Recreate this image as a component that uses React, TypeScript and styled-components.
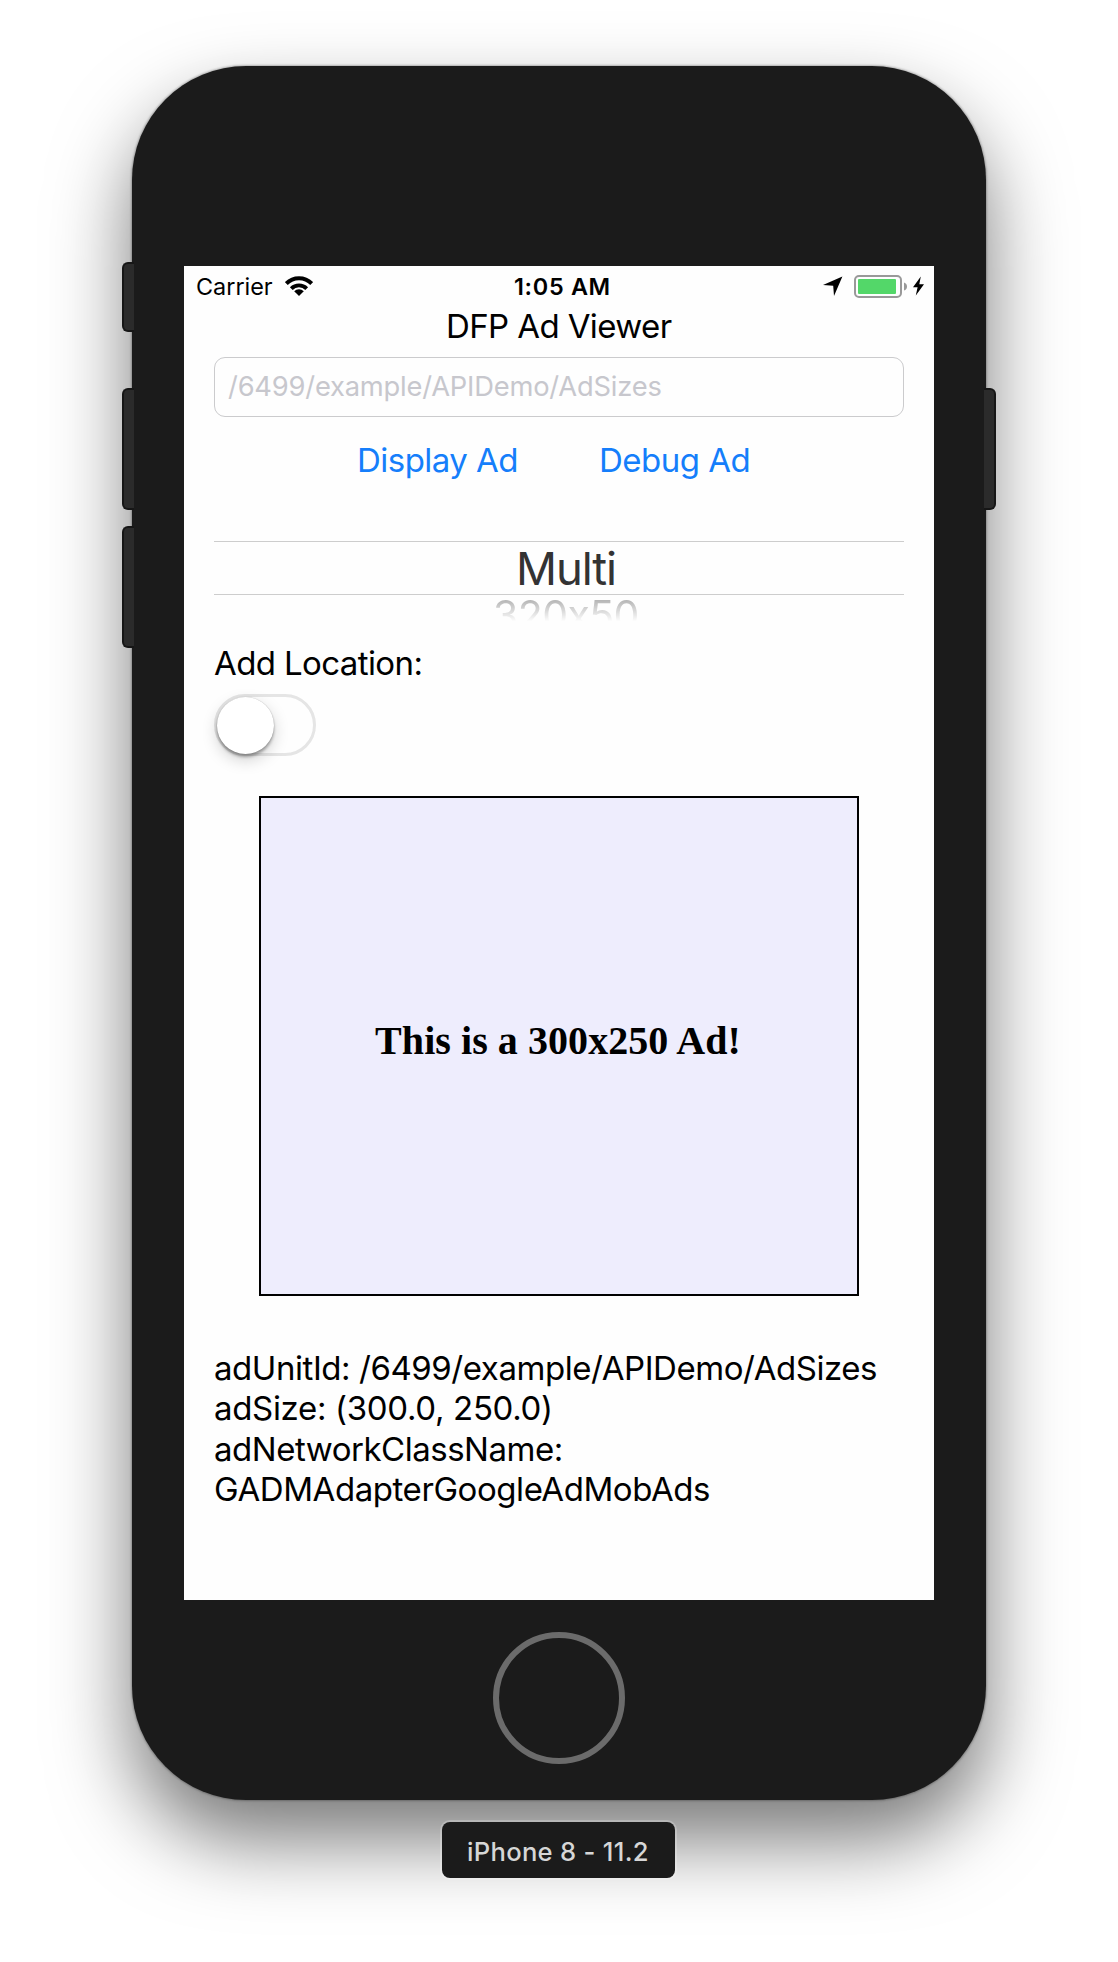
import React from 'react';
import styled, { createGlobalStyle } from 'styled-components';

const GlobalStyle = createGlobalStyle`
  * { box-sizing: border-box; }
  body {
    margin: 0;
    background: #fff;
    font-family: Inter, Roboto, "Liberation Sans", sans-serif;
    color: #000;
  }
`;

const Stage = styled.main`
  width: 1118px;
  height: 1962px;
  padding-top: 66px;
  display: flex;
  flex-direction: column;
  align-items: center;
  overflow: hidden;
`;

const Device = styled.div`
  display: flex;
  align-items: flex-start;
`;

const Rail = styled.div<{ $side: 'left' | 'right'; $top: number }>`
  position: relative;
  z-index: 1;
  display: flex;
  flex-direction: column;
  padding-top: ${(p) => p.$top}px;
  margin-${(p) => (p.$side === 'left' ? 'right' : 'left')}: -2px;
`;

const SideKey = styled.div<{ $side: 'left' | 'right'; $height: number; $gap?: number }>`
  width: 12px;
  height: ${(p) => p.$height}px;
  margin-top: ${(p) => p.$gap ?? 0}px;
  background: #2b2b2b;
  border: 2px solid #161616;
  border-${(p) => (p.$side === 'left' ? 'right' : 'left')}: 0;
  border-radius: ${(p) => (p.$side === 'left' ? '6px 0 0 6px' : '0 6px 6px 0')};
`;

const Body = styled.div`
  width: 854px;
  height: 1734px;
  border-radius: 114px;
  background: #1b1b1b;
  display: flex;
  flex-direction: column;
  align-items: center;
  padding-top: 200px;
  box-shadow: 0 0 2px 1px rgba(0, 0, 0, 0.25), 0 40px 80px rgba(0, 0, 0, 0.53);
`;

const Screen = styled.div`
  width: 750px;
  height: 1334px;
  background: #fefefe;
  display: flex;
  flex-direction: column;
`;

const HomeButton = styled.div`
  width: 132px;
  height: 132px;
  margin-top: 32px;
  border: 6px solid #6b6b6b;
  border-radius: 50%;
`;

const StatusBar = styled.header`
  display: grid;
  grid-template-columns: 318px 1fr auto;
  align-items: center;
  height: 40px;
  padding: 0 10px 0 12px;
  font-size: 23.4px;
  line-height: 38px;
`;

const StatusGroup = styled.div`
  display: flex;
  align-items: center;
`;

const Carrier = styled.span`
  width: 89px;
  padding-top: 2px;
`;

const Clock = styled.span`
  padding-top: 2px;
  font-weight: 600;
  letter-spacing: 0.7px;
`;

const BatteryIcon = styled.svg`
  margin: 0 6px 0 11px;
`;

const Content = styled.div`
  padding: 0 30px;
  display: flex;
  flex-direction: column;
`;

const Title = styled.h1`
  margin: 0;
  padding-left: 232px;
  font-size: 33px;
  font-weight: 400;
  line-height: 40px;
  letter-spacing: -0.605px;
`;

const Field = styled.div`
  height: 60px;
  margin-top: 11px;
  padding: 0 13px;
  border: 1px solid #cbcbcd;
  border-radius: 11px;
  font-size: 27.3px;
  line-height: 58px;
  letter-spacing: -0.195px;
  color: #c7c7cd;
`;

const Actions = styled.div`
  display: flex;
  height: 40px;
  margin-top: 23px;
  padding-left: 143px;
`;

const LinkButton = styled.button<{ $width?: number }>`
  width: ${(p) => (p.$width ? `${p.$width}px` : 'auto')};
  padding: 0;
  border: 0;
  background: none;
  text-align: left;
  font: inherit;
  font-size: 33px;
  line-height: 40px;
  letter-spacing: -0.526px;
  color: #157efb;
  white-space: nowrap;
`;

const Picker = styled.div`
  margin-top: 61px;
  height: 81px;
`;

const PickerSelected = styled.div`
  height: 54px;
  padding: 2px 0 0 302px;
  border: solid #cdcdcd;
  border-width: 1px 0;
  font-size: 45.4px;
  line-height: 50px;
  letter-spacing: -1.1px;
  color: #333;
`;

const PickerNext = styled.div`
  height: 27px;
  padding-left: 279px;
  overflow: hidden;
  font-size: 41px;
  font-weight: 400;
  line-height: 41px;
  letter-spacing: -0.6px;
  color: #b2b2b2;
  mask-image: linear-gradient(#000 15%, transparent 98%);
`;

const Label = styled.label`
  margin-top: 21px;
  font-size: 33px;
  line-height: 40px;
  letter-spacing: -0.607px;
`;

const Switch = styled.div`
  width: 102px;
  height: 62px;
  margin-top: 11px;
  border: 3px solid #e5e5e5;
  border-radius: 31px;
`;

const Knob = styled.div`
  width: 57px;
  height: 57px;
  border-radius: 50%;
  background: #fff;
  box-shadow: 0 0 1px rgba(0, 0, 0, 0.3), 0 3px 3px rgba(0, 0, 0, 0.3), 0 6px 16px rgba(0, 0, 0, 0.18);
`;

const AdBanner = styled.div`
  width: 600px;
  height: 500px;
  margin: 40px 0 0 45px;
  padding: 0 2px 11px 0;
  border: 2px solid #000;
  background: #eeedfd;
  display: flex;
  align-items: center;
  justify-content: center;
  font: 700 40px/46px "Liberation Serif", "Times New Roman", serif;
  letter-spacing: 0.06px;
`;

const Info = styled.div`
  margin-top: 51px;
  padding-top: 0.5px;
  font-size: 33px;
  line-height: 40.5px;
  white-space: nowrap;
`;

const InfoLine = styled.div<{ $tracking: number }>`
  letter-spacing: ${(p) => p.$tracking}px;
`;

const DeviceName = styled.div`
  width: 233px;
  height: 56px;
  margin: 22px 1px 0 0;
  padding: 2px 0 0 25px;
  border-radius: 8px;
  background: #1b1b1b;
  box-shadow: 0 0 0 2px rgba(255, 255, 255, 0.22);
  position: relative;
  font-size: 25.6px;
  font-weight: 500;
  line-height: 56px;
  letter-spacing: 0.3px;
  color: #d6d6d6;
  white-space: nowrap;
`;

const details = [
  { text: 'adUnitId: /6499/example/APIDemo/AdSizes', tracking: -0.446 },
  { text: 'adSize: (300.0, 250.0)', tracking: -0.328 },
  { text: 'adNetworkClassName:', tracking: -0.482 },
  { text: 'GADMAdapterGoogleAdMobAds', tracking: -0.43 },
];

function Wifi() {
  return (
    <svg width="28" height="20" viewBox="0 0 28 20" fill="none" stroke="#000">
      <path d="M1.3 7.6A17.9 17.9 0 0 1 26.7 7.6" strokeWidth="4.1" />
      <path d="M6.3 12.6A10.9 10.9 0 0 1 21.7 12.6" strokeWidth="3.9" />
      <path d="M14 20L9.2 15.3A6.8 6.8 0 0 1 18.8 15.3Z" fill="#000" stroke="none" />
    </svg>
  );
}

function LocationArrow() {
  return (
    <svg width="20" height="20" viewBox="0 0 20 20">
      <path d="M19.4.6L0 9L10.2 9.7L11 19.9Z" />
    </svg>
  );
}

function Battery() {
  return (
    <BatteryIcon width="53" height="24" viewBox="0 0 53 24">
      <rect x="1" y="2" width="46" height="21" rx="4" fill="none" stroke="#999" strokeWidth="2" />
      <rect x="4" y="5" width="38" height="15" rx="1" fill="#53d769" />
      <path d="M50 8.5Q53 9.5 53 12.5T50 16.5Z" fill="#999" />
    </BatteryIcon>
  );
}

function Bolt() {
  return (
    <svg width="11" height="20" viewBox="0 0 11 20">
      <path d="M7.8.5L0 11.3H4.6L2.8 19.6L11 8.2H6.3Z" />
    </svg>
  );
}

export default function App() {
  return (
    <>
      <GlobalStyle />
      <Stage>
        <Device>
          <Rail $side="left" $top={196}>
            <SideKey $side="left" $height={70} />
            <SideKey $side="left" $height={122} $gap={56} />
            <SideKey $side="left" $height={122} $gap={16} />
          </Rail>
          <Body>
            <Screen>
              <StatusBar>
                <StatusGroup>
                  <Carrier>Carrier</Carrier>
                  <Wifi />
                </StatusGroup>
                <Clock>1:05 AM</Clock>
                <StatusGroup>
                  <LocationArrow />
                  <Battery />
                  <Bolt />
                </StatusGroup>
              </StatusBar>
              <Content>
                <Title>DFP Ad Viewer</Title>
                <Field>/6499/example/APIDemo/AdSizes</Field>
                <Actions>
                  <LinkButton $width={242}>Display Ad</LinkButton>
                  <LinkButton>Debug Ad</LinkButton>
                </Actions>
                <Picker>
                  <PickerSelected>Multi</PickerSelected>
                  <PickerNext>320x50</PickerNext>
                </Picker>
                <Label>Add Location:</Label>
                <Switch>
                  <Knob />
                </Switch>
                <AdBanner>This is a 300x250 Ad!</AdBanner>
                <Info>
                  {details.map((d) => (
                    <InfoLine key={d.text} $tracking={d.tracking}>
                      {d.text}
                    </InfoLine>
                  ))}
                </Info>
              </Content>
            </Screen>
            <HomeButton />
          </Body>
          <Rail $side="right" $top={322}>
            <SideKey $side="right" $height={122} />
          </Rail>
        </Device>
        <DeviceName>iPhone 8 - 11.2</DeviceName>
      </Stage>
    </>
  );
}
